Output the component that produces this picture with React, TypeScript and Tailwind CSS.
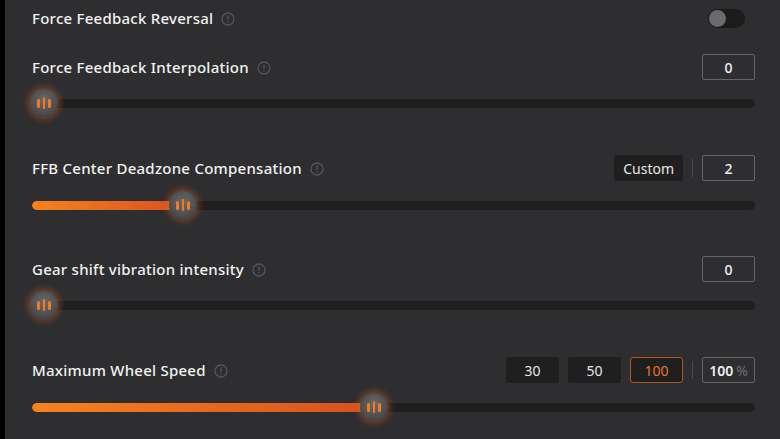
import React from 'react';

const InfoIcon: React.FC = () => (
  <svg width="14" height="14" viewBox="0 0 14 14" className="ml-2 shrink-0">
    <circle cx="7" cy="7" r="6" fill="none" stroke="#555558" strokeWidth="1.3" />
    <rect x="6.3" y="3.3" width="1.4" height="4.6" rx="0.7" fill="#555558" />
    <circle cx="7" cy="10" r="0.8" fill="#555558" />
  </svg>
);

const Label: React.FC<{ text: string }> = ({ text }) => (
  <div className="flex items-center pt-[1px]">
    <span className="text-[15px] font-medium text-[#f2f2f2] tracking-[0.25px]">{text}</span>
    <InfoIcon />
  </div>
);

const ValueBox: React.FC<{ value: string; unit?: string }> = ({ value, unit }) => (
  <div className="w-[53px] h-[26px] flex items-center justify-center border border-[#666668] rounded-[2px] text-[14px] text-[#f0f0f0]">
    <span className={unit ? 'font-semibold' : 'font-medium'}>{value}</span>
    {unit && <span className="ml-[3px] text-[#6e6e70]">{unit}</span>}
  </div>
);

const Divider: React.FC = () => <div className="w-px h-[18px] bg-[#4a4a4c] mx-[9px]" />;

const Preset: React.FC<{ text: string; active?: boolean }> = ({ text, active }) => (
  <div
    className={
      active
        ? 'w-[53px] h-[26px] flex items-center justify-center rounded-[3px] bg-[#1f1f20] border border-[#b5561f] text-[14px] text-[#ec7428]'
        : 'w-[53px] h-[26px] flex items-center justify-center rounded-[3px] bg-[#1f1f20] text-[14px] text-[#e6e6e6]'
    }
  >
    {text}
  </div>
);

const Slider: React.FC<{ pos: number }> = ({ pos }) => (
  <div className="relative h-[26px] flex items-center">
    <div className="w-full h-[9px] rounded-full bg-[#1f1f20] overflow-hidden">
      <div
        className="h-full rounded-full bg-gradient-to-r from-[#f6821f] to-[#d8501f]"
        style={{ width: `${pos}px` }}
      />
    </div>
    <div
      className="absolute top-[-1px] w-[28px] h-[28px] rounded-full flex items-center justify-center gap-[3px] bg-[radial-gradient(circle_at_50%_40%,#6a6a6c,#3a3a3c)] shadow-[0_0_6px_2px_rgba(230,100,30,0.45)]"
      style={{ left: `${pos - 14}px` }}
    >
      <div className="w-[2.5px] h-[9px] rounded-full bg-[#f47a22]" />
      <div className="w-[2.5px] h-[12px] rounded-full bg-[#f47a22]" />
      <div className="w-[2.5px] h-[9px] rounded-full bg-[#f47a22]" />
    </div>
  </div>
);

export default function App() {
  return (
    <div
      className="w-[780px] h-[439px] flex overflow-hidden bg-[#2e2e30]"
      style={{ fontFamily: '"Noto Sans", "Open Sans", sans-serif' }}
    >
      <div className="w-[5px] bg-black shrink-0" />
      <div className="flex-1 pl-[27px] pr-[25px] pt-[5px]">
        <div className="h-[26px] flex items-center justify-between">
          <Label text="Force Feedback Reversal" />
          <div className="w-[37px] h-[19px] rounded-full bg-[#1b1b1c] flex items-center pl-[1px] mr-[10px]">
            <div className="w-[17px] h-[17px] rounded-full bg-[#6b6b6d]" />
          </div>
        </div>

        <div className="mt-[23px] h-[26px] flex items-center justify-between">
          <Label text="Force Feedback Interpolation" />
          <ValueBox value="0" />
        </div>
        <div className="mt-[10px]">
          <Slider pos={12} />
        </div>

        <div className="mt-[39px] h-[26px] flex items-center justify-between">
          <Label text="FFB Center Deadzone Compensation" />
          <div className="flex items-center">
            <div className="h-[26px] px-[9px] flex items-center rounded-[3px] bg-[#1f1f20] text-[14px] text-[#e6e6e6]">Custom</div>
            <Divider />
            <ValueBox value="2" />
          </div>
        </div>
        <div className="mt-[11px]">
          <Slider pos={151} />
        </div>

        <div className="mt-[38px] h-[26px] flex items-center justify-between">
          <Label text="Gear shift vibration intensity" />
          <ValueBox value="0" />
        </div>
        <div className="mt-[10px]">
          <Slider pos={12} />
        </div>

        <div className="mt-[39px] h-[26px] flex items-center justify-between">
          <Label text="Maximum Wheel Speed" />
          <div className="flex items-center gap-[9px]">
            <Preset text="30" />
            <Preset text="50" />
            <Preset text="100" active />
            <div className="flex items-center">
              <div className="w-px h-[18px] bg-[#4a4a4c] mr-[9px]" />
              <ValueBox value="100" unit="%" />
            </div>
          </div>
        </div>
        <div className="mt-[11px]">
          <Slider pos={342} />
        </div>
      </div>
    </div>
  );
}
